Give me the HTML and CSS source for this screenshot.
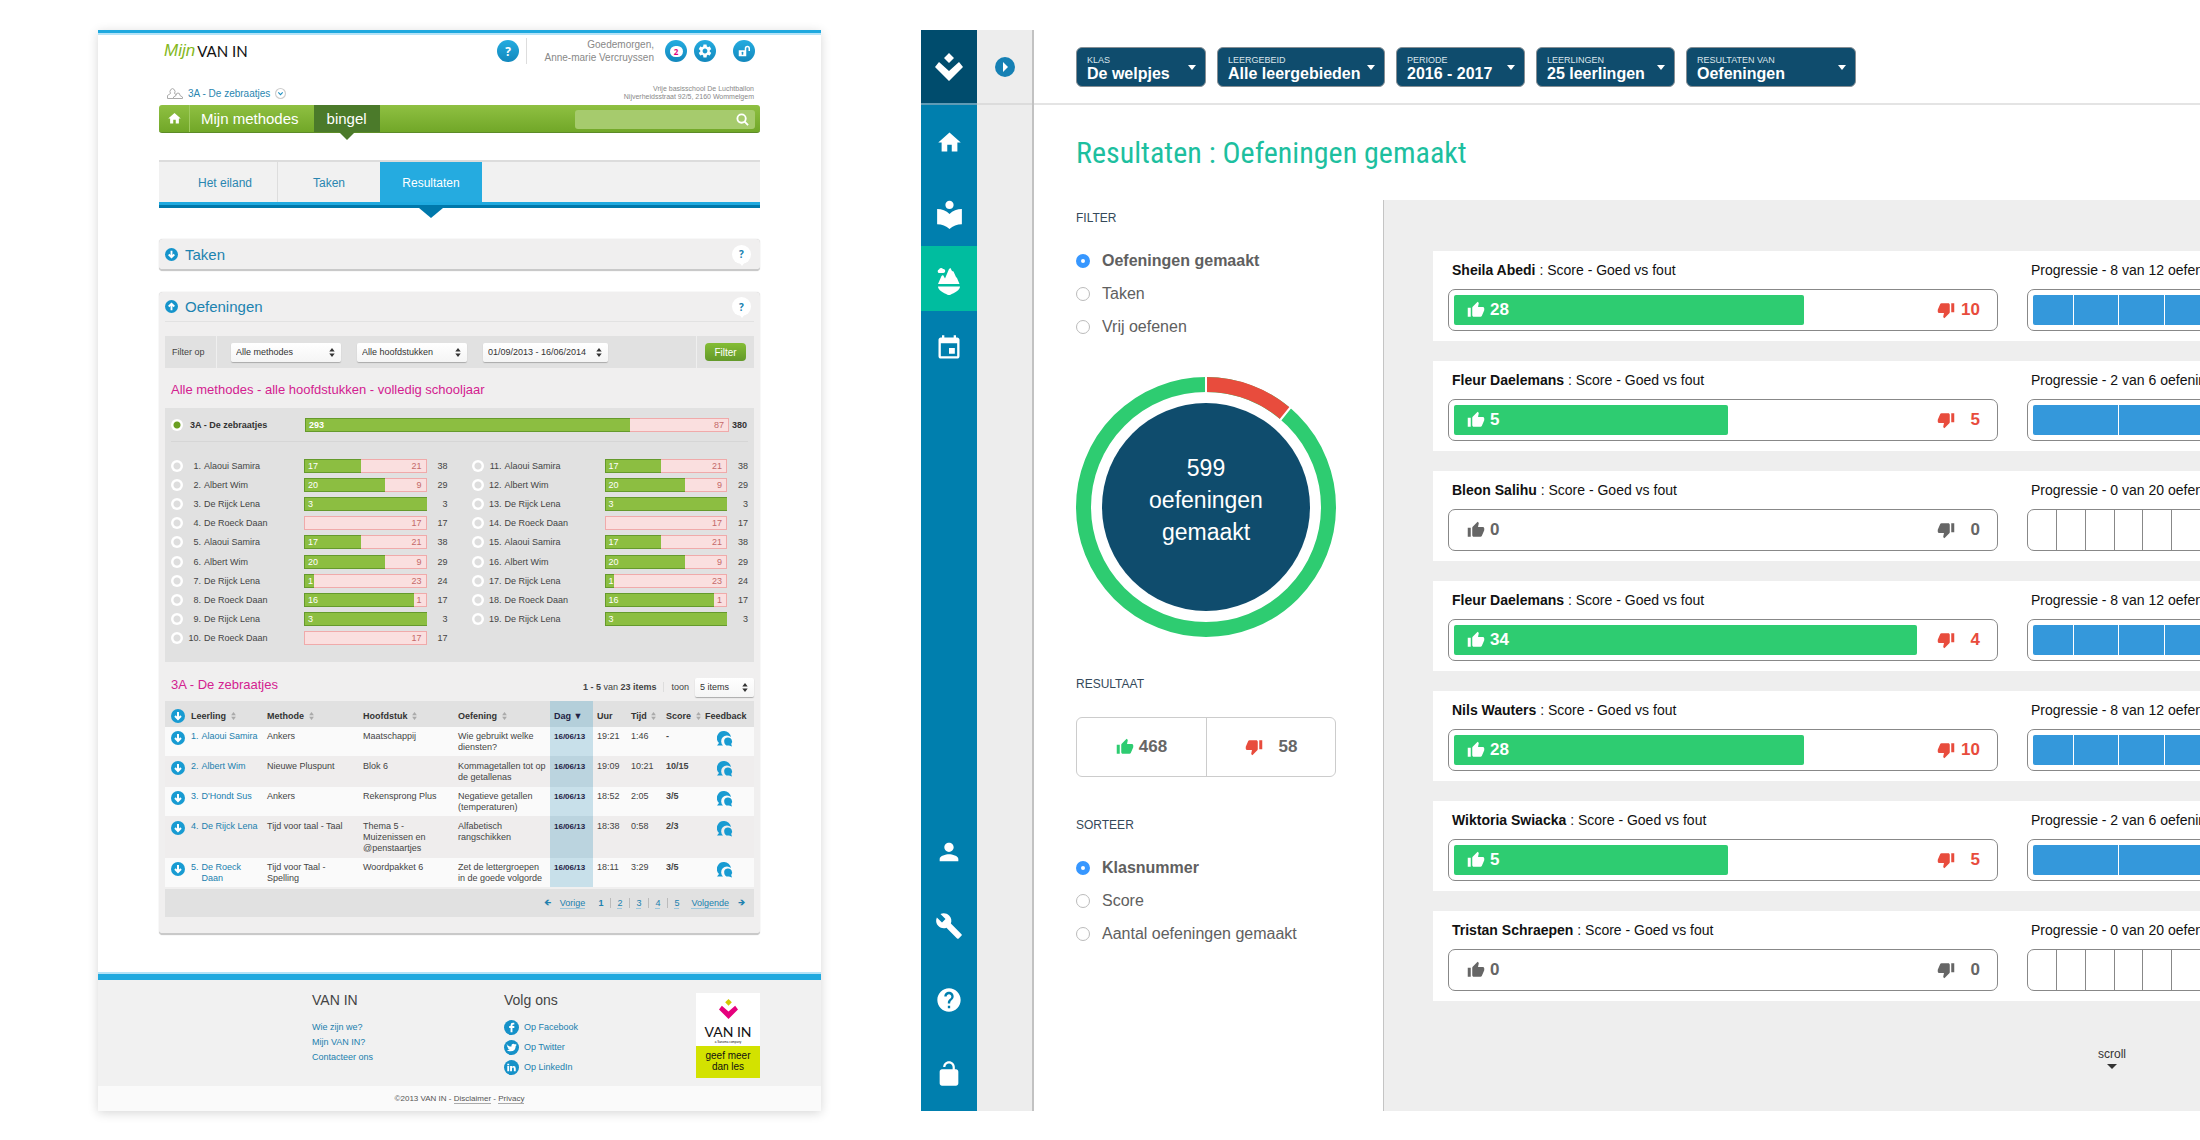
FILE: index.html
```html
<!DOCTYPE html>
<html lang="nl">
<head>
<meta charset="utf-8">
<title>Resultaten</title>
<link rel="stylesheet" href="styles.css">
</head>
<body>
<svg class="sprite" aria-hidden="true">
  <symbol id="i-up" viewBox="0 0 24 24"><path d="M1 21h4V9H1v12zm22-11c0-1.1-.9-2-2-2h-6.310l.95-4.570.03-.32c0-.41-.17-.79-.44-1.060L14.170 1 7.590 7.590C7.220 7.950 7 8.450 7 9v10c0 1.100.9 2 2 2h9c.83 0 1.540-.5 1.840-1.220l3.020-7.050c.09-.23.14-.47.14-.73v-2z"/></symbol>
  <symbol id="i-down" viewBox="0 0 24 24"><path d="M15 3H6c-.83 0-1.540.5-1.840 1.220l-3.020 7.050c-.09.23-.14.47-.14.73v2c0 1.100.9 2 2 2h6.310l-.95 4.570-.03.32c0 .41.17.79.44 1.060L9.830 23l6.590-6.590c.36-.36.58-.86.58-1.410V5c0-1.100-.9-2-2-2zm4 0v12h4V3h-4z"/></symbol>
  <symbol id="i-home" viewBox="0 0 24 24"><path d="M10 20v-6h4v6h5v-8h3L12 3 2 12h3v8z"/></symbol>
  <symbol id="i-reader" viewBox="0 0 24 24"><path d="M12 11.550C9.640 9.350 6.480 8 3 8v11c3.480 0 6.640 1.350 9 3.550 2.360-2.190 5.520-3.550 9-3.550V8c-3.480 0-6.640 1.350-9 3.550zM12 8c1.660 0 3-1.340 3-3s-1.340-3-3-3-3 1.340-3 3 1.340 3 3 3z"/></symbol>
  <symbol id="i-island" viewBox="0 0 24 28"><path d="M1 17L4.500 9l1.500-1 2 3.500L12 2l1.500-1L15 4l1.500.5L19 10l1 1 2.500 6zM1 19.500h22c0 4-6 6.500-11 9-5-2.500-11-5-11-9z"/><path d="M1.500 6A2 2 0 0 1 2 2.500 2.300 2.300 0 0 1 6 2 2 2 0 0 1 6.500 6z"/></symbol>
  <symbol id="i-calendar" viewBox="0 0 24 24"><path d="M17 12h-5v5h5v-5zM16 1v2H8V1H6v2H5c-1.110 0-1.990.9-1.990 2L3 19c0 1.100.89 2 2 2h14c1.100 0 2-.9 2-2V5c0-1.100-.9-2-2-2h-1V1h-2zm3 18H5V8h14v11z"/></symbol>
  <symbol id="i-person" viewBox="0 0 24 24"><path d="M12 12c2.210 0 4-1.790 4-4s-1.790-4-4-4-4 1.790-4 4 1.790 4 4 4zm0 2c-2.670 0-8 1.340-8 4v2h16v-2c0-2.660-5.330-4-8-4z"/></symbol>
  <symbol id="i-wrench" viewBox="0 0 24 24"><path d="M22.700 19l-9.100-9.100c.9-2.300.4-5-1.500-6.900-2-2-5-2.400-7.400-1.300L9 6 6 9 1.600 4.700C.4 7.100.9 10.100 2.900 12.100c1.900 1.900 4.600 2.400 6.900 1.500l9.100 9.100c.4.4 1 .4 1.400 0l2.300-2.300c.5-.4.5-1.100.1-1.400z"/></symbol>
  <symbol id="i-help" viewBox="0 0 24 24"><path d="M12 2C6.480 2 2 6.480 2 12s4.480 10 10 10 10-4.480 10-10S17.520 2 12 2zm1 17h-2v-2h2v2zm2.070-7.750l-.9.92C13.450 12.900 13 13.500 13 15h-2v-.5c0-1.100.45-2.100 1.170-2.830l1.240-1.260c.37-.36.59-.86.59-1.410 0-1.100-.9-2-2-2s-2 .9-2 2H8c0-2.210 1.790-4 4-4s4 1.790 4 4c0 .88-.36 1.680-.93 2.250z"/></symbol>
  <symbol id="i-lock" viewBox="0 0 24 24"><path d="M12 17c1.100 0 2-.9 2-2s-.9-2-2-2-2 .9-2 2 .9 2 2 2zm6-9h-1V6c0-2.760-2.240-5-5-5S7 3.240 7 6h1.900c0-1.710 1.390-3.100 3.100-3.100 1.710 0 3.100 1.390 3.100 3.100v2H6c-1.100 0-2 .9-2 2v10c0 1.100.9 2 2 2h12c1.100 0 2-.9 2-2V10c0-1.100-.9-2-2-2z"/></symbol>
  <symbol id="i-gear" viewBox="0 0 24 24"><path d="M19.140 12.940c.04-.3.06-.61.06-.94 0-.32-.02-.64-.07-.94l2.030-1.580c.18-.14.23-.41.12-.61l-1.920-3.320c-.12-.22-.37-.29-.59-.22l-2.390.96c-.5-.38-1.030-.7-1.620-.94l-.36-2.540c-.04-.24-.24-.41-.48-.41h-3.840c-.24 0-.43.17-.47.41l-.36 2.540c-.59.24-1.130.57-1.620.94l-2.390-.96c-.22-.08-.47 0-.59.22L2.740 8.870c-.12.21-.08.47.12.61l2.030 1.580c-.05.3-.09.63-.09.94s.02.64.07.94l-2.030 1.580c-.18.14-.23.41-.12.61l1.920 3.320c.12.22.37.29.59.22l2.390-.96c.5.38 1.030.7 1.620.94l.36 2.540c.05.24.24.41.48.41h3.840c.24 0 .44-.17.47-.41l.36-2.540c.59-.24 1.130-.56 1.620-.94l2.390.96c.22.08.47 0 .59-.22l1.920-3.320c.12-.22.07-.47-.12-.61l-2.010-1.580zM12 15.600c-1.980 0-3.600-1.620-3.600-3.600s1.620-3.600 3.600-3.600 3.600 1.620 3.600 3.600-1.620 3.600-3.600 3.600z"/></symbol>
  <symbol id="i-unlock" viewBox="0 0 16 16"><path d="M1 7h8V4.500a3.500 3.500 0 0 1 7 0V8h-2V4.500a1.500 1.500 0 0 0-3 0V15H1zM6 9a1.200 1.200 0 0 0-1 2v2h2v-2a1.200 1.200 0 0 0-1-2z" fill-rule="evenodd"/></symbol>
  <symbol id="i-logo" viewBox="0 0 28 28"><path d="M14 0l5 5-5 5-5-5zM4 9l10 9 10-9 4 5-14 14L0 14z"/></symbol>
  <symbol id="i-arrow" viewBox="0 0 14 14"><circle cx="7" cy="7" r="7"/><path d="M7 3v7M4 7l3 3 3-3" fill="none" stroke="#fff" stroke-width="2"/></symbol>
  <symbol id="i-sort" viewBox="0 0 6 10"><path d="M3 0l3 4H0zM3 10l3-4H0z"/></symbol>
  <symbol id="i-chat" viewBox="0 0 16 16"><path d="M7 0a7 7 0 0 0-5 12l-2 2.500h6A5 5 0 1 1 14 6 7 7 0 0 0 7 0z"/><path d="M10.500 6.500a4 4 0 1 0 1.500 8l3 1-.8-2.500a4 4 0 0 0-3.700-6.500z"/></symbol>
</svg>

<div class="screens">
<section class="old">
  <header class="old-head">
    <a class="brand" href="#"><i>Mijn</i> VAN IN</a>
    <div class="tools">
      <button class="disc" aria-label="Help">?</button>
      <p class="hello">Goedemorgen,<br>Anne-marie Vercruyssen</p>
      <button class="disc" aria-label="Berichten"><span class="talk">2</span></button>
      <button class="disc" aria-label="Instellingen"><svg><use href="#i-gear"/></svg></button>
      <button class="disc disc-lock" aria-label="Afmelden"><svg><use href="#i-unlock"/></svg></button>
    </div>
  </header>
  <div class="class-row">
    <a class="class-link" href="#">
      <svg class="people" viewBox="0 0 16 12"><g fill="#fff" stroke="#aaa"><path d="M.5 11.500v-3l3-2a2.500 3 0 1 1 4 0l3 2v3z"/><path d="M6.500 11.500V10l2.500-1.500a2 2.500 0 1 1 4 0l2.500 1.500v1.500z"/></g></svg>
      3A - De zebraatjes
      <svg class="chev" viewBox="0 0 10 10"><circle cx="5" cy="5" r="4.500" fill="#fff" stroke="#ccc"/><path d="M3 4l2 2 2-2" fill="none" stroke="#1d8fc0"/></svg>
    </a>
    <p class="school">Vrije basisschool De Luchtballon<br>Nijverheidsstraat 92/5, 2160 Wommelgem</p>
  </div>
  <nav class="green">
    <a class="g-home" href="#" aria-label="Start"><svg><use href="#i-home"/></svg></a>
    <a class="g-item" href="#">Mijn methodes</a>
    <a class="g-item g-on" href="#">bingel</a>
    <label class="search"><input type="search" aria-label="Zoeken"><svg viewBox="0 0 14 14"><circle cx="6" cy="6" r="4.500"/><path d="M9 9l4 4"/></svg></label>
  </nav>
  <nav class="tabs">
    <a href="#">Het eiland</a><a href="#">Taken</a><a class="tab-on" href="#">Resultaten</a>
  </nav>
  <section class="panel panel-shut">
    <h2><svg><use href="#i-arrow"/></svg>Taken</h2><button class="bubble" aria-label="Uitleg taken">?</button>
  </section>
  <section class="panel panel-open">
    <div class="panel-head"><h2><svg class="flip"><use href="#i-arrow"/></svg>Oefeningen</h2><button class="bubble" aria-label="Uitleg oefeningen">?</button></div>
    <form class="filters">
      <span class="f-label">Filter op</span>
      <span class="drop drop-m"><select aria-label="Methode"><option>Alle methodes</option></select><svg><use href="#i-sort"/></svg></span>
      <span class="drop drop-m"><select aria-label="Hoofdstuk"><option>Alle hoofdstukken</option></select><svg><use href="#i-sort"/></svg></span>
      <span class="drop drop-l"><select aria-label="Periode"><option>01/09/2013 - 16/06/2014</option></select><svg><use href="#i-sort"/></svg></span>
      <span class="f-go"><button type="button">Filter</button></span>
    </form>
    <h3 class="pink">Alle methodes - alle hoofdstukken - volledig schooljaar</h3>
    <div class="scores">
      <label class="total"><input type="radio" name="pupil" checked><b>3A - De zebraatjes</b><span class="bar"><span class="ok" style="width:77%">293</span><span class="bad">87</span></span><b class="sum">380</b></label>
      <div class="pupils" id="pupils"></div>
    </div>
    <div class="list-head">
      <h3 class="pink">3A - De zebraatjes</h3>
      <p><b>1 - 5</b> van <b>23 items</b></p>
      <label class="show">toon <span class="drop drop-s"><select><option>5 items</option></select><svg><use href="#i-sort"/></svg></span></label>
    </div>
    <table class="results">
      <thead><tr>
        <th class="c-ico"><svg class="dot"><use href="#i-arrow"/></svg></th><th class="c-name">Leerling <svg><use href="#i-sort"/></svg></th><th class="c-meth">Methode <svg><use href="#i-sort"/></svg></th><th class="c-chap">Hoofdstuk <svg><use href="#i-sort"/></svg></th><th class="c-ex">Oefening <svg><use href="#i-sort"/></svg></th><th class="c-day">Dag ▼</th><th class="c-hour">Uur</th><th class="c-time">Tijd <svg><use href="#i-sort"/></svg></th><th class="c-score">Score <svg><use href="#i-sort"/></svg></th><th class="c-fb">Feedback</th>
      </tr></thead>
      <tbody id="results"></tbody>
    </table>
    <nav class="pager"><span>🡸</span><a href="#">Vorige</a><ol><li><b>1</b></li><li><a href="#">2</a></li><li><a href="#">3</a></li><li><a href="#">4</a></li><li><a href="#">5</a></li></ol><a href="#">Volgende</a><span>🡺</span></nav>
  </section>
  <footer class="old-foot">
    <div class="foot-cols">
      <div><h4>VAN IN</h4><ul><li><a href="#">Wie zijn we?</a></li><li><a href="#">Mijn VAN IN?</a></li><li><a href="#">Contacteer ons</a></li></ul></div>
      <div><h4>Volg ons</h4><ul class="social">
        <li><a href="#"><svg viewBox="0 0 16 16"><circle cx="8" cy="8" r="8"/><path fill="#fff" d="M9 13V8.500h2V6.500H9V5.500q0-.8 1-.8h1V3H9.500Q7 3 7 5.500v1H5.500v2H7V13z"/></svg>Op Facebook</a></li>
        <li><a href="#"><svg viewBox="0 0 16 16"><circle cx="8" cy="8" r="8"/><path fill="#fff" d="M3 4.500q2 2.500 5 2.500Q7.500 4 10 4q1 0 1.700.7L13.500 4l-.8 1.400.8-.1-1 1Q12.500 12 7 12q-2.500 0-4-1 2 0 3-.8-1.500-.2-2-1.500h1Q3.300 8 3.300 6.300l.9.2Q2.500 5.500 3 4.500z"/></svg>Op Twitter</a></li>
        <li><a href="#"><svg viewBox="0 0 16 16"><circle cx="8" cy="8" r="8"/><path fill="#fff" d="M3.500 6.500h2V12h-2zM3.500 4h2v1.700h-2zM6.500 6.500h2v.8Q9 6.400 10.300 6.400 12.500 6.400 12.500 9v3h-2V9.300Q10.500 8 9.600 8 8.500 8 8.500 9.300V12h-2z"/></svg>Op LinkedIn</a></li>
      </ul></div>
      <a class="badge" href="#"><svg viewBox="0 0 20 21"><path fill="#d2c800" d="M10 0l3.500 3.500L10 7 6.500 3.500z"/><path fill="#e5007d" d="M3 7l7 6 7-6 3 4-10 10L0 11z"/></svg><b>VAN IN</b><small>a Sanoma company</small><em>geef meer<br>dan les</em></a>
    </div>
    <p class="legal">©2013 VAN IN - <a href="#">Disclaimer</a> - <a href="#">Privacy</a></p>
  </footer>
</section>

<section class="app">
  <nav class="side">
    <a class="side-logo" href="#" aria-label="VAN IN"><svg><use href="#i-logo"/></svg></a>
    <a href="#" aria-label="Start"><svg class="s-home"><use href="#i-home"/></svg></a>
    <a class="side-read" href="#" aria-label="Methodes"><svg class="s-reader"><use href="#i-reader"/></svg></a>
    <a class="side-on" href="#" aria-label="Eiland"><svg class="s-island"><use href="#i-island"/></svg></a>
    <a href="#" aria-label="Agenda"><svg><use href="#i-calendar"/></svg></a>
    <div class="side-low">
      <a href="#" aria-label="Profiel"><svg><use href="#i-person"/></svg></a>
      <a href="#" aria-label="Beheer"><svg><use href="#i-wrench"/></svg></a>
      <a href="#" aria-label="Help"><svg><use href="#i-help"/></svg></a>
      <a href="#" aria-label="Afmelden"><svg><use href="#i-lock"/></svg></a>
    </div>
  </nav>
  <div class="strip"><div class="strip-top"><button aria-label="Menu openen"><svg viewBox="0 0 20 20"><circle cx="10" cy="10" r="10" fill="#1580b4"/><path d="M8 5l5 5-5 5z" fill="#fff"/></svg></button></div></div>
  <main class="main">
    <header class="chips">
      <label class="chip w1">KLAS<select><option>De welpjes</option></select></label>
      <label class="chip w2">LEERGEBEID<select><option>Alle leergebieden</option></select></label>
      <label class="chip w3">PERIODE<select><option>2016 - 2017</option></select></label>
      <label class="chip w4">LEERLINGEN<select><option>25 leerlingen</option></select></label>
      <label class="chip w5">RESULTATEN VAN<select><option>Oefeningen</option></select></label>
    </header>
    <h1>Resultaten : Oefeningen gemaakt</h1>
    <div class="body">
      <aside class="options">
        <h2>FILTER</h2>
        <label class="opt"><input type="radio" name="filter" checked>Oefeningen gemaakt</label>
        <label class="opt"><input type="radio" name="filter">Taken</label>
        <label class="opt"><input type="radio" name="filter">Vrij oefenen</label>
        <div class="donut">
          <svg viewBox="0 0 260 260"><circle cx="130" cy="130" r="122.500" fill="none" stroke="#2ecc71" stroke-width="15"/><path d="M130 7.500A122.500 122.500 0 0 1 209.500 36.800" fill="none" stroke="#e84c3d" stroke-width="15"/><path d="M130 0v16M203.500 44L216 28.500" stroke="#fff" stroke-width="2"/><circle cx="130" cy="130" r="104" fill="#0f4c6d"/></svg>
          <p>599<br>oefeningen<br>gemaakt</p>
        </div>
        <h2 class="h-res">RESULTAAT</h2>
        <div class="tally"><span class="good"><svg><use href="#i-up"/></svg><b>468</b></span><span class="wrong"><svg><use href="#i-down"/></svg><b>58</b></span></div>
        <h2 class="h-sort">SORTEER</h2>
        <label class="opt"><input type="radio" name="sort" checked>Klasnummer</label>
        <label class="opt"><input type="radio" name="sort">Score</label>
        <label class="opt"><input type="radio" name="sort">Aantal oefeningen gemaakt</label>
      </aside>
      <div class="board"><div class="board-in"><div class="cards" id="cards"></div><p class="more">scroll<span></span></p></div></div>
    </div>
  </main>
</section>
</div>
<script src="app.js"></script>
</body>
</html>
```
FILE: app.js
```js
// name, good, wrong, width of the good part in %
const pattern = [
  ['Alaoui Samira', 17, 21, 47], ['Albert Wim', 20, 9, 67], ['De Rijck Lena', 3, 0, 100], ['De Roeck Daan', 0, 17, 0],
  ['Alaoui Samira', 17, 21, 47], ['Albert Wim', 20, 9, 67], ['De Rijck Lena', 1, 23, 8], ['De Roeck Daan', 16, 1, 91],
  ['De Rijck Lena', 3, 0, 100], ['De Roeck Daan', 0, 17, 0]
];
let html = '';
for (let i = 0; i < 19; i++) {
  const [name, ok, bad, w] = pattern[i % 10];
  html += `<label class="pupil"><input type="radio" name="pupil"><span class="nr">${i + 1}.</span><span class="nm">${name}</span>` +
    `<span class="bar">${ok ? `<span class="ok" style="width:${w}%">${ok}</span>` : ''}${bad ? `<span class="bad">${bad}</span>` : ''}</span>` +
    `<span class="sum">${ok + bad}</span></label>`;
}
document.getElementById('pupils').innerHTML = html;

const rows = [
  ['1.', 'Alaoui Samira', 'Ankers', 'Maatschappij', 'Wie gebruikt welke<br>diensten?', '19:21', '1:46', '-'],
  ['2.', 'Albert Wim', 'Nieuwe Pluspunt', 'Blok 6', 'Kommagetallen tot op<br>de getallenas', '19:09', '10:21', '10/15'],
  ['3.', "D'Hondt Sus", 'Ankers', 'Rekensprong Plus', 'Negatieve getallen<br>(temperaturen)', '18:52', '2:05', '3/5'],
  ['4.', 'De Rijck Lena', 'Tijd voor taal - Taal', 'Thema 5 -<br>Muizenissen en<br>@penstaartjes', 'Alfabetisch<br>rangschikken', '18:38', '0:58', '2/3'],
  ['5.', 'De Roeck<br>Daan', 'Tijd voor Taal -<br>Spelling', 'Woordpakket 6', 'Zet de lettergroepen<br>in de goede volgorde', '18:11', '3:29', '3/5']
];
document.getElementById('results').innerHTML = rows.map(r =>
  `<tr><td class="c-ico"><svg class="dot"><use href="#i-arrow"/></svg></td><td><a href="#"><span>${r[0]}</span><span>${r[1]}</span></a></td>` +
  `<td>${r[2]}</td><td>${r[3]}</td><td>${r[4]}</td><td class="day">16/06/13</td><td class="hour">${r[5]}</td><td>${r[6]}</td><td><b>${r[7]}</b></td>` +
  `<td class="fb"><svg><use href="#i-chat"/></svg></td></tr>`).join('');

// name, good, wrong, width of the good part in %, exercises done, exercises in all, cells in the progress bar
const cards = [
  ['Sheila Abedi', 28, 10, 65, 8, 12, 12], ['Fleur Daelemans', 5, 5, 51, 2, 6, 6], ['Bleon Salihu', 0, 0, 0, 0, 20, 19],
  ['Fleur Daelemans', 34, 4, 86, 8, 12, 12], ['Nils Wauters', 28, 10, 65, 8, 12, 12], ['Wiktoria Swiacka', 5, 5, 51, 2, 6, 6],
  ['Tristan Schraepen', 0, 0, 0, 0, 20, 19]
];
document.getElementById('cards').innerHTML = cards.map(([name, ok, bad, w, done, all, cells]) => {
  let seg = '';
  for (let i = 0; i < cells; i++) seg += `<i class="${i < done ? 'done' : ''}"></i>`;
  return `<article class="card"><div><h3><b>${name}</b> : Score - Goed vs fout</h3>` +
    `<div class="meter ${ok ? '' : 'empty'}"><span class="fill" style="width:${w}%"><svg><use href="#i-up"/></svg><b>${ok}</b></span>` +
    `<span class="miss"><svg><use href="#i-down"/></svg><b>${bad}</b></span></div></div>` +
    `<div><h3>Progressie - ${done} van ${all} oefeningen</h3><div class="steps ${done ? '' : 'steps-none'}">${seg}</div></div></article>`;
}).join('');
```
FILE: styles.css
```css
* { box-sizing: border-box; }
body, h1, h2, h3, h4, p, ul, ol { margin: 0; padding: 0; font-weight: normal; }
ul, ol { list-style: none; }
a { color: inherit; text-decoration: none; }
svg { display: block; flex: none; fill: currentColor; }
button, select, input { font: inherit; color: inherit; margin: 0; padding: 0; border: 0; background: none; }
input[type="radio"] { appearance: none; flex: none; border-radius: 50%; }
select { appearance: none; }
body { font-family: "Liberation Sans", Arial, sans-serif; background: #fff; }
.sprite { position: absolute; width: 0; height: 0; }
.screens { display: flex; gap: 100px; min-height: 100vh; padding: 30px 0 30px 98px; overflow: hidden; }

/* ---- classic site ---- */
.old { flex: 0 1 723px; display: flex; flex-direction: column; border-top: 3px solid #1fa9df; font-size: 9px; color: #444; box-shadow: 0 2px 10px rgba(0, 0, 0, .16); }
.old > * { margin-left: 61px; margin-right: 61px; }
.old > .old-head { display: flex; justify-content: space-between; align-items: center; height: 34px; margin: 0; padding: 0 66px; border-top: 2px solid #b5e3f7; }
.brand { font: 15px Lato, sans-serif; color: #111; display: flex; align-items: center; gap: 2px; }
.brand i { font: italic 17px "Liberation Sans", sans-serif; color: #85b81d; }
.tools { display: flex; align-items: center; gap: 7px; }
.disc { display: grid; place-items: center; width: 22px; height: 22px; border-radius: 50%; background: linear-gradient(#24ace0, #1388bd); color: #fff; font: bold 12px "Open Sans", sans-serif; }
.disc svg { width: 16px; height: 16px; }
.disc-lock svg { width: 12px; height: 12px; }
.disc-lock { margin-left: 10px; }
.hello { width: 128px; margin-right: 4px; border-left: 1px solid #ddd; font-size: 10px; line-height: 13px; text-align: right; color: #888; }
.talk { width: 13px; height: 11px; border-radius: 6px; background: #fff; color: #e5007d; font-size: 8px; line-height: 11px; }
.class-row { display: flex; justify-content: space-between; align-items: center; height: 38px; padding: 14px 6px 0 8px; }
.class-link { display: flex; align-items: center; gap: 5px; font-size: 10px; color: #2a86b0; }
.people { width: 16px; height: 12px; }
.chev { width: 11px; height: 11px; }
.school { font-size: 7px; line-height: 8px; text-align: right; color: #888; }
.green { display: flex; align-items: stretch; height: 28px; flex: none; border-radius: 3px; background: linear-gradient(#8fc042, #71a728); border-bottom: 1px solid #5c8b27; color: #fff; font-size: 15px; line-height: 27px; }
.g-home { width: 31px; display: grid; place-items: center; border-right: 1px solid #a0cb60; }
.g-home svg { width: 15px; height: 15px; }
.g-item { padding: 0 12px 0 11px; }
.g-on { position: relative; margin-left: 3px; padding: 0 13px; background: #4b7a2a; }
.g-on::after { content: ""; position: absolute; left: 50%; top: 100%; margin-left: -8px; border: 8px solid transparent; border-top-color: #4b7a2a; border-bottom: 0; }
.search { display: flex; align-items: center; width: 180px; height: 19px; margin: 5px 5px 0 auto; padding-right: 6px; border-radius: 3px; background: #a6cb6d; }
.search input { flex: 1; min-width: 0; outline: 0; appearance: none; }
.search svg { width: 13px; height: 13px; fill: none; stroke: #fff; stroke-width: 2; }
.tabs { display: flex; flex: none; height: 48px; margin-top: 27px; border-top: 2px solid #dcdcdc; border-bottom: 3px solid #0078ab; background: linear-gradient(#f1f1f1 40px, #1fa9df 40px); font-size: 12px; line-height: 42px; color: #2a86b0; text-align: center; }
.tabs a { width: 102px; margin-bottom: 3px; }
.tabs a:first-child { width: 119px; padding-left: 14px; border-right: 1px solid #ddd; }
.tabs .tab-on { position: relative; background: #25abe0; color: #fff; }
.tab-on::after { content: ""; position: absolute; left: 50%; top: 46px; margin-left: -12px; border: 12px solid transparent; border-top: 10px solid #0078ab; border-bottom: 0; }
.panel { border-radius: 4px; background: #f0efef; border-bottom: 2px solid #c9c9c9; box-shadow: 0 0 1px #bbb; }
.panel h2 { display: flex; align-items: center; gap: 7px; font-size: 15px; color: #1c83b0; }
.panel h2 svg { width: 13px; height: 13px; color: #1594cb; }
.flip { transform: rotate(180deg); }
.panel-shut { display: flex; justify-content: space-between; align-items: center; height: 32px; flex: none; margin-top: 31px; padding: 0 9px 0 6px; }
.panel-open { margin-top: 21px; padding: 0 6px 16px; }
.panel-head { display: flex; justify-content: space-between; align-items: center; height: 30px; padding-right: 3px; border-bottom: 1px solid #e2e2e2; }
.bubble { position: relative; width: 19px; height: 19px; border-radius: 50%; background: #fff; color: #1580b0; font: bold 10px "Open Sans", sans-serif; }
.bubble::after { content: ""; position: absolute; left: 7px; top: 17px; border: 3px solid transparent; border-top: 4px solid #fff; border-bottom: 0; }
.filters { display: flex; align-items: center; height: 32px; margin-top: 14px; background: #e1e1e1; }
.f-label { width: 52px; height: 32px; margin-right: 14px; padding-left: 7px; border-right: 1px solid #efefef; font-size: 9px; line-height: 32px; }
.drop { position: relative; display: block; height: 19px; background: linear-gradient(#fff, #f5f5f5); border-radius: 2px; box-shadow: 0 1px 1px #aaa; color: #333; }
.drop select { width: 100%; height: 19px; padding-left: 5px; font-size: 9px; }
.drop svg { position: absolute; right: 6px; top: 5px; width: 6px; height: 9px; pointer-events: none; }
.drop-m { width: 110px; margin-right: 16px; }
.drop-l { width: 125px; }
.drop-s { width: 59px; }
.f-go { margin-left: auto; padding: 7px 8px; border-left: 1px solid #efefef; }
.f-go button { display: block; width: 41px; height: 18px; border-radius: 4px; background: linear-gradient(#84bd35, #63992a); color: #fff; font-size: 10px; }
.pink { font-size: 13px; color: #d3218f; }
.panel-open > .pink { padding: 4px 6px 0; line-height: 36px; }
.scores { background: #e1e1e1; padding-bottom: 14px; }
.total { display: grid; grid-template-columns: 12px 108px 1fr 12px; column-gap: 7px; align-items: center; height: 34px; margin: 0 6px; border-bottom: 1px solid #d6d6d6; }
.total b { font-size: 9px; color: #333; white-space: nowrap; }
.scores input { width: 12px; height: 12px; background: radial-gradient(#ddd 3px, #fff 4px); }
.scores input:checked { background: radial-gradient(#6a9f22 3px, #fff 4px); }
.bar { display: flex; height: 14px; line-height: 14px; border: 1px solid #f0aaaa; background: #fadfdf; font-size: 9px; }
.ok { flex: none; padding-left: 3px; margin: -1px 0 -1px -1px; background: #8cbe41; border: 1px solid #659a2c; border-right: 0; line-height: 13px; color: #fff; }
.ok:only-child { margin-right: -1px; flex: 1; }
.bad { flex: 1; padding-right: 4px; text-align: right; color: #c46a6a; line-height: 13px; }
.sum { text-align: right; }
.total .ok { font-weight: bold; }
.total .sum { text-align: left; margin-left: -4px; }
.pupils { display: grid; grid-auto-flow: column; grid-template-rows: repeat(10, 1fr); grid-template-columns: 1fr 1fr; column-gap: 24px; height: 192px; margin: 14px 6px 0; }
.pupil { display: grid; grid-template-columns: 12px 15px 97px 1fr 18px; column-gap: 3px; align-items: center; line-height: 14px; }
.pupil .nr { text-align: right; }
.pupil .nm { white-space: nowrap; }
.list-head { display: flex; align-items: center; height: 39px; padding: 11px 0 0 6px; font-size: 9px; }
.list-head .pink { flex: 1; padding-bottom: 5px; }
.list-head p { padding-right: 7px; margin-right: 7px; border-right: 1px solid #ddd; white-space: nowrap; }
.show { display: flex; align-items: center; gap: 6px; }
.results { width: 100%; border-collapse: collapse; table-layout: fixed; font-size: 9px; line-height: 11px; color: #444; }
.results th { height: 26px; padding: 4px 0 0; background: #e1e1e1; font-size: 9px; text-align: left; color: #333; white-space: nowrap; }
.results th svg:not(.dot) { display: inline-block; width: 5px; height: 8px; margin-left: 2px; color: #aaa; vertical-align: -1px; }
.results td { padding: 4px 0 3px; vertical-align: top; background: #fafafa; }
.results tr:nth-child(even) td { padding-top: 5px; padding-bottom: 4px; background: #efeded; }
.results tbody a { display: flex; gap: 3px; color: #2080ae; }
.c-ico { width: 26px; }
.c-name { width: 76px; }
.c-meth { width: 96px; }
.c-chap { width: 95px; }
.c-ex { width: 92px; }
.c-day { width: 43px; }
.c-hour { width: 38px; }
.c-time { width: 35px; }
.c-score { width: 39px; }
.results .c-day, .results tbody .day { padding-left: 4px; font-weight: bold; background: #c8e0ea; color: #224; }
.results tbody .day { font-size: 8px; }
.results .c-hour, .results tbody .hour { padding-left: 4px; }
.results .c-day { background: #b4cfda; }
.results tr:nth-child(even) td.day { background: #bbd4df; }
.dot { width: 14px; height: 14px; margin-left: 6px; color: #189bd2; }
.fb svg { width: 16px; height: 16px; margin-left: 12px; color: #189bd2; }
.pager { display: flex; justify-content: flex-end; align-items: center; gap: 9px; height: 28px; margin-top: 2px; padding-right: 9px; background: #e1e1e1; color: #2080ae; font-size: 9px; }
.pager a { border-bottom: 1px solid #9cc7dc; line-height: 10px; }
.pager ol { display: flex; margin: 0 2px 0 4px; }
.pager li { padding-right: 7px; line-height: 10px; }
.pager li + li { padding-left: 6px; border-left: 1px solid #bbb; }
.pager li:last-child { padding-right: 1px; }
.old > .old-foot { margin: 37px 0 0; border-top: 2px solid #b5e3f7; }
.foot-cols { display: grid; grid-template-columns: 192px 192px 64px; justify-content: end; padding: 13px 61px 0 0; height: 112px; border-top: 6px solid #1fa9df; background: #f1f1f1; color: #2080ae; }
.foot-cols h4 { font-size: 14px; line-height: 14px; color: #444; }
.foot-cols ul { margin-top: 13px; line-height: 15px; }
.foot-cols .social { margin-top: 10px; line-height: 20px; }
.social a { display: flex; align-items: center; gap: 5px; }
.social svg { width: 15px; height: 15px; color: #1591c8; }
.badge { display: flex; flex-direction: column; align-items: center; height: 85px; padding-top: 6px; background: #fff; color: #111; text-align: center; }
.badge svg { width: 19px; height: 20px; }
.badge b { margin-top: 6px; font: 14px/14px Lato, sans-serif; }
.badge small { font-size: 3px; line-height: 7px; }
.badge em { align-self: stretch; flex: 1; padding-top: 4px; background: #d3e200; font-style: normal; font-size: 10px; line-height: 11px; }
.legal { background: #fafafa; font-size: 8px; line-height: 25px; text-align: center; color: #555; }
.legal a { border-bottom: 1px solid #aaa; }

/* ---- new application ---- */
.app { flex: 1; min-width: 0; display: flex; }
.side { display: flex; flex-direction: column; flex: 0 0 56px; background: #007fae; color: #fff; }
.side a { display: grid; place-items: center; height: 70px; padding-top: 4px; }
.side svg { width: 28px; height: 28px; }
.side .side-logo { height: 75px; padding: 0; background: #004c6d; border-bottom: 2px solid #5f9bb5; }
.side .s-home { width: 27px; height: 27px; }
.side .side-read { height: 71px; padding-top: 8px; }
.side .s-reader { width: 33px; height: 33px; }
.side .s-island { width: 24px; }
.side .side-on { height: 65px; background: #00bd9f; }
.side-low { margin-top: auto; }
.side .side-low a { height: 74px; padding: 0; }
.strip { flex: 0 0 57px; background: #ededed; border-right: 2px solid #c2c2c2; }
.strip-top { display: grid; place-items: center; height: 75px; border-bottom: 2px solid #dcdcdc; }
.strip button { width: 20px; height: 20px; }
.main { flex: 1; min-width: 0; display: flex; flex-direction: column; }
.chips { display: flex; align-items: center; gap: 11px; height: 75px; padding-left: 42px; border-bottom: 2px solid #e4e4e4; }
.chip { position: relative; height: 40px; padding: 8px 10px 0; border: 1px solid #868e93; border-radius: 6px; background: #0f4c6d; color: #dce6ec; font-size: 9px; line-height: 9px; }
.chip select { display: block; width: 100%; font-size: 16px; line-height: 18px; font-weight: bold; color: #fff; }
.chip::after { content: ""; position: absolute; right: 9px; top: 17px; border: 4px solid transparent; border-top: 5px solid #fff; border-bottom: 0; }
.w1 { width: 130px; }
.w2 { width: 168px; }
.w3 { width: 129px; }
.w4 { width: 139px; }
.w5 { width: 170px; }
h1 { padding-left: 42px; font: 30px/95px "Roboto Condensed", "Noto Sans CJK JP", sans-serif; color: #1dbf9f; }
.body { flex: 1; display: flex; }
.options { flex: 0 0 350px; padding: 11px 46px 0 42px; border-right: 1px solid #c4c4c4; }
.options h2 { margin-bottom: 19px; font-size: 12px; line-height: 14px; color: #34495a; }
.opt { display: flex; align-items: center; gap: 12px; height: 33px; font-size: 16px; color: #606060; white-space: nowrap; }
.opt:has(:checked) { font-weight: bold; }
.opt input { width: 14px; height: 14px; border: 1px solid #bbb; background: #fff; }
.opt input:checked { border: 5px solid #3797ff; }
.donut { display: grid; place-items: center; width: 260px; margin-top: 34px; }
.donut > * { grid-area: 1 / 1; }
.donut svg { width: 260px; height: 260px; }
.donut p { padding-bottom: 14px; font-size: 23px; line-height: 32px; text-align: center; color: #fff; }
.options .h-res { margin: 40px 0 26px; }
.options .h-sort { margin-top: 41px; }
.tally { display: grid; grid-template-columns: 1fr 1fr; width: 260px; height: 60px; border: 1px solid #ccc; border-radius: 6px; font-size: 17px; color: #666; }
.tally span { display: flex; align-items: center; justify-content: center; gap: 5px; }
.tally svg { width: 18px; height: 18px; }
.good svg { color: #2ecc71; }
.wrong { border-left: 1px solid #ccc; }
.tally .wrong { gap: 16px; }
.wrong svg { color: #e84c3d; }
.board { flex: 1; min-width: 0; overflow: hidden; background: #eee; }
.board-in { width: 1358px; margin-left: 49px; padding-top: 51px; }
.cards { display: grid; gap: 20px; }
.card { display: grid; grid-template-columns: 550px 550px; column-gap: 29px; height: 90px; padding: 11px 15px 0; background: #fff; }
.card h3 { padding-left: 4px; font-size: 14px; line-height: 16px; color: #111; white-space: nowrap; }
.meter, .steps { height: 42px; margin-top: 11px; border: 1px solid #888; border-radius: 7px; }
.meter { display: flex; justify-content: space-between; padding: 5px; font-size: 17px; }
.meter svg { width: 18px; height: 18px; }
.fill, .miss { display: flex; align-items: center; gap: 5px; }
.fill { padding-left: 13px; border-radius: 2px; background: #2ecc71; color: #fff; }
.miss { padding-right: 12px; color: #e84c3d; }
.miss b { min-width: 20px; text-align: right; }
.empty .fill { background: none; }
.empty .fill, .empty .miss { color: #666; }
.steps { display: grid; grid-auto-flow: column; grid-auto-columns: 1fr; padding: 5px 0; overflow: hidden; }
.steps i { border-right: 1px solid #888; }
.steps .done { border-right: 1px solid #fff; background: #3498db; }
.steps .done:first-child { margin-left: 5px; border-radius: 2px 0 0 2px; }
.steps-none { padding: 0; }
.more { margin-top: 45px; font-size: 12px; line-height: 16px; text-align: center; color: #333; }
.more span { display: block; width: 0; margin: 2px auto 0; border: 5px solid transparent; border-top: 5px solid #333; border-bottom: 0; }
```
